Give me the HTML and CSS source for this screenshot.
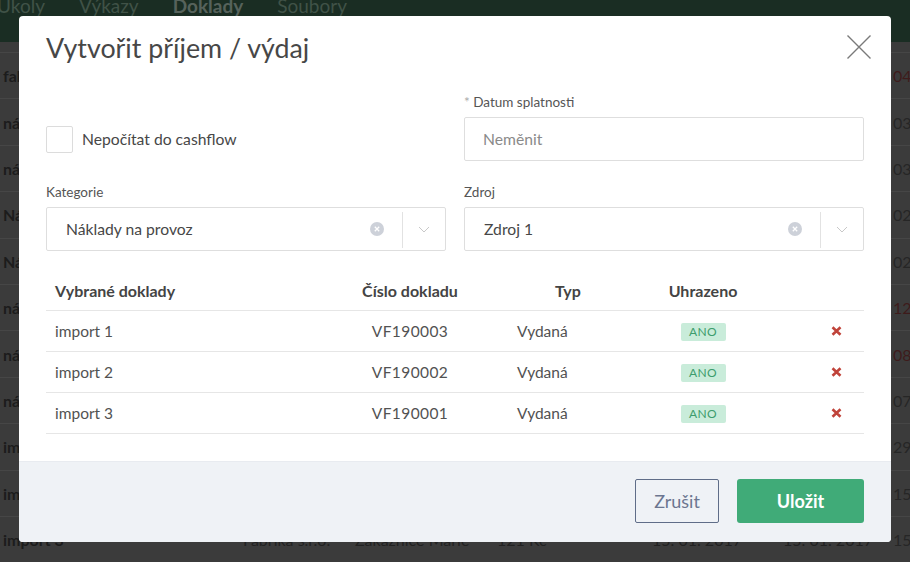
FILE: index.html
```html
<!DOCTYPE html>
<html lang="cs">
<head>
<meta charset="utf-8">
<title>Vytvořit příjem / výdaj</title>
<link rel="stylesheet" href="styles.css">
</head>
<body>
<div class="page">
  <nav class="topnav">
    <div class="topnav-links">
      <span class="nav-link">Úkoly</span>
      <span class="nav-link">Výkazy</span>
      <span class="nav-link active">Doklady</span>
      <span class="nav-link">Soubory</span>
    </div>
  </nav>
  <div class="bg-table">
    <div class="bg-row"><span class="bg-name">faktura</span><span>Fabrika s.r.o.</span><span>Zákaznice Marie</span><span>121 Kč</span><span>04. 02. 2019</span><span>04. 02. 2019</span><span class="bg-date red">04. 02.</span></div>
    <div class="bg-row"><span class="bg-name">nájem</span><span>Fabrika s.r.o.</span><span>Zákaznice Marie</span><span>121 Kč</span><span>03. 02. 2019</span><span>03. 02. 2019</span><span class="bg-date">03. 02.</span></div>
    <div class="bg-row"><span class="bg-name">nájem</span><span>Fabrika s.r.o.</span><span>Zákaznice Marie</span><span>121 Kč</span><span>03. 01. 2019</span><span>03. 01. 2019</span><span class="bg-date">03. 01.</span></div>
    <div class="bg-row"><span class="bg-name">Nákup</span><span>Fabrika s.r.o.</span><span>Zákaznice Marie</span><span>121 Kč</span><span>02. 01. 2019</span><span>02. 01. 2019</span><span class="bg-date">02. 01.</span></div>
    <div class="bg-row"><span class="bg-name">Nákup</span><span>Fabrika s.r.o.</span><span>Zákaznice Marie</span><span>121 Kč</span><span>02. 01. 2019</span><span>02. 01. 2019</span><span class="bg-date">02. 01.</span></div>
    <div class="bg-row"><span class="bg-name">nájem</span><span>Fabrika s.r.o.</span><span>Zákaznice Marie</span><span>121 Kč</span><span>12. 12. 2018</span><span>12. 12. 2018</span><span class="bg-date red">12. 12.</span></div>
    <div class="bg-row"><span class="bg-name">nájem</span><span>Fabrika s.r.o.</span><span>Zákaznice Marie</span><span>121 Kč</span><span>08. 12. 2018</span><span>08. 12. 2018</span><span class="bg-date red">08. 12.</span></div>
    <div class="bg-row"><span class="bg-name">nájem</span><span>Fabrika s.r.o.</span><span>Zákaznice Marie</span><span>121 Kč</span><span>07. 12. 2018</span><span>07. 12. 2018</span><span class="bg-date">07. 12.</span></div>
    <div class="bg-row"><span class="bg-name">import 1</span><span>Fabrika s.r.o.</span><span>Zákaznice Marie</span><span>121 Kč</span><span>29. 01. 2017</span><span>29. 01. 2017</span><span class="bg-date">29. 01.</span></div>
    <div class="bg-row"><span class="bg-name">import 2</span><span>Fabrika s.r.o.</span><span>Zákaznice Marie</span><span>121 Kč</span><span>15. 01. 2017</span><span>15. 01. 2017</span><span class="bg-date">15. 01.</span></div>
    <div class="bg-row"><span class="bg-name">import 3</span><span>Fabrika s.r.o.</span><span>Zákaznice Marie</span><span>121 Kč</span><span>15. 01. 2017</span><span>15. 01. 2017</span><span class="bg-date">15. 01.</span></div>
  </div>
</div>

<div class="modal" role="dialog" aria-label="Vytvořit příjem / výdaj">
  <header class="modal-header">
    <h1 class="modal-title">Vytvořit příjem / výdaj</h1>
    <button class="modal-close" aria-label="Zavřít">
      <svg width="24" height="24" viewBox="0 0 24 24"><path d="M0.5 0.5 L23.5 23.5 M23.5 0.5 L0.5 23.5" stroke="#7a7a7a" stroke-width="1.4" fill="none"/></svg>
    </button>
  </header>

  <div class="modal-body">
    <div class="form-grid">
      <div class="field field-check">
        <label class="checkbox">
          <span class="checkbox-box"></span>
          <span class="checkbox-label">Nepočítat do cashflow</span>
        </label>
      </div>
      <div class="field">
        <div class="field-label"><span class="req">*</span> Datum splatnosti</div>
        <div class="input placeholder">Neměnit</div>
      </div>
      <div class="field">
        <div class="field-label">Kategorie</div>
        <div class="select">
          <span class="select-value">Náklady na provoz</span>
          <span class="select-clear"><svg width="14" height="14" viewBox="0 0 14 14"><circle cx="7" cy="7" r="7" fill="#cdd1d9"/><path d="M4.8 4.8 L9.2 9.2 M9.2 4.8 L4.8 9.2" stroke="#fff" stroke-width="1.3"/></svg></span>
          <span class="select-sep"></span>
          <span class="select-arrow"><svg width="12" height="7" viewBox="0 0 12 7"><path d="M1 1 L6 6 L11 1" stroke="#c8c8c8" stroke-width="1" fill="none"/></svg></span>
        </div>
      </div>
      <div class="field">
        <div class="field-label">Zdroj</div>
        <div class="select">
          <span class="select-value">Zdroj 1</span>
          <span class="select-clear"><svg width="14" height="14" viewBox="0 0 14 14"><circle cx="7" cy="7" r="7" fill="#cdd1d9"/><path d="M4.8 4.8 L9.2 9.2 M9.2 4.8 L4.8 9.2" stroke="#fff" stroke-width="1.3"/></svg></span>
          <span class="select-sep"></span>
          <span class="select-arrow"><svg width="12" height="7" viewBox="0 0 12 7"><path d="M1 1 L6 6 L11 1" stroke="#c8c8c8" stroke-width="1" fill="none"/></svg></span>
        </div>
      </div>
    </div>

    <div class="doc-table">
      <div class="doc-row doc-head">
        <div class="c-name">Vybrané doklady</div>
        <div class="c-num">Číslo dokladu</div>
        <div class="c-type">Typ</div>
        <div class="c-paid">Uhrazeno</div>
        <div class="c-del"></div>
      </div>
      <div class="doc-row">
        <div class="c-name">import 1</div>
        <div class="c-num">VF190003</div>
        <div class="c-type">Vydaná</div>
        <div class="c-paid"><span class="badge">ANO</span></div>
        <div class="c-del"><svg width="11" height="10" viewBox="0 0 11 10"><path d="M1.5 1.2 L9.5 8.8 M9.5 1.2 L1.5 8.8" stroke="#c0433a" stroke-width="2.6"/></svg></div>
      </div>
      <div class="doc-row">
        <div class="c-name">import 2</div>
        <div class="c-num">VF190002</div>
        <div class="c-type">Vydaná</div>
        <div class="c-paid"><span class="badge">ANO</span></div>
        <div class="c-del"><svg width="11" height="10" viewBox="0 0 11 10"><path d="M1.5 1.2 L9.5 8.8 M9.5 1.2 L1.5 8.8" stroke="#c0433a" stroke-width="2.6"/></svg></div>
      </div>
      <div class="doc-row">
        <div class="c-name">import 3</div>
        <div class="c-num">VF190001</div>
        <div class="c-type">Vydaná</div>
        <div class="c-paid"><span class="badge">ANO</span></div>
        <div class="c-del"><svg width="11" height="10" viewBox="0 0 11 10"><path d="M1.5 1.2 L9.5 8.8 M9.5 1.2 L1.5 8.8" stroke="#c0433a" stroke-width="2.6"/></svg></div>
      </div>
    </div>
  </div>

  <footer class="modal-footer">
    <button class="btn btn-cancel">Zrušit</button>
    <button class="btn btn-save">Uložit</button>
  </footer>
</div>
</body>
</html>
```

FILE: styles.css
```css
* { box-sizing: border-box; }

html, body {
  margin: 0;
  padding: 0;
}

body {
  width: 910px;
  height: 562px;
  overflow: hidden;
  background: #3b3b3b;
  font-family: Lato, "Open Sans", "Liberation Sans", sans-serif;
  position: relative;
}

/* ---------- dimmed page behind the dialog ---------- */
.page {
  width: 910px;
}

.topnav {
  height: 42px;
  background: #1a2d23;
  overflow: hidden;
}

.topnav-links {
  display: flex;
  gap: 34px;
  margin-top: -5px;
  margin-left: -3px;
  font-size: 19px;
  line-height: 22px;
}

.nav-link {
  color: #405247;
}

.nav-link.active {
  color: #56625b;
  font-weight: 700;
}

.bg-table {
  padding-top: 10px;
}

.bg-row {
  height: 46.4px;
  border-top: 1px solid #464646;
  display: grid;
  grid-template-columns: 240px 112px 142px 155px 131px 110px auto;
  align-items: center;
  padding-left: 3px;
  font-size: 16px;
  color: #222;
  white-space: nowrap;
}

.bg-name {
  font-weight: 700;
  color: #1c1c1c;
}

.bg-date {
  color: #262626;
}

.bg-date.red {
  color: #3e1b1b;
}

/* ---------- dialog ---------- */
.modal {
  position: absolute;
  left: 19px;
  top: 16px;
  width: 872px;
  height: 526px;
  background: #fff;
  border-radius: 4px;
  overflow: hidden;
  display: flex;
  flex-direction: column;
}

.modal-header {
  position: relative;
  padding: 16px 27px 0;
}

.modal-title {
  margin: 0;
  font-size: 26.8px;
  line-height: 32px;
  font-weight: 400;
  color: #474747;
}

.modal-close {
  position: absolute;
  top: 19px;
  right: 20px;
  width: 24px;
  height: 24px;
  padding: 0;
  border: 0;
  background: none;
  display: block;
}

.modal-close svg {
  display: block;
}

.modal-body {
  padding: 29px 27px 0;
  flex: 1;
}

.form-grid {
  display: grid;
  grid-template-columns: 400px 400px;
  column-gap: 18px;
  row-gap: 22px;
  align-items: end;
}

.field-label {
  font-size: 13.5px;
  line-height: 18px;
  color: #555;
  margin-bottom: 6px;
}

.req {
  color: #aaa;
}

.field-check {
  height: 44px;
  display: flex;
  align-items: center;
}

.checkbox {
  display: flex;
  align-items: center;
  gap: 9px;
}

.checkbox-box {
  width: 27px;
  height: 27px;
  border: 1px solid #dcdcdc;
  border-radius: 2px;
  background: #fff;
}

.checkbox-label {
  font-size: 15.7px;
  color: #474747;
}

.input,
.select {
  height: 44px;
  border: 1px solid #dedede;
  border-radius: 2px;
  font-size: 15.7px;
  display: flex;
  align-items: center;
  padding-left: 18px;
}

.input.placeholder {
  color: #8a8a8a;
}

.select-value {
  flex: 1;
  color: #474747;
  padding-left: 1px;
}

.select-clear {
  width: 14px;
  height: 14px;
  margin-right: 18px;
}

.select-clear svg,
.select-arrow svg {
  display: block;
}

.select-sep {
  width: 1px;
  height: 36px;
  background: #e2e2e2;
  margin-top: 2px;
}

.select-arrow {
  width: 42px;
  display: flex;
  justify-content: center;
}

/* ---------- selected documents ---------- */
.doc-table {
  margin-top: 19px;
}

.doc-row {
  display: grid;
  grid-template-columns: 314px 100px 176px 134px 94px;
  height: 41px;
  align-items: center;
  border-bottom: 1px solid #e6e6e6;
  font-size: 15.5px;
  color: #525252;
  white-space: nowrap;
}

.doc-head {
  font-weight: 700;
  font-size: 16px;
  color: #444;
}

.c-name {
  padding-left: 9px;
}

.c-num {
  text-align: center;
  letter-spacing: 0.4px;
}

.doc-head .c-num {
  letter-spacing: 0;
}

.c-type {
  padding-left: 57px;
}

.doc-head .c-type {
  padding-left: 40px;
  text-align: center;
}

.c-paid {
  text-align: center;
}

.c-del {
  display: flex;
  justify-content: flex-end;
  padding-right: 22px;
}

.badge {
  display: inline-block;
  width: 45px;
  height: 18px;
  line-height: 18px;
  border-radius: 2px;
  background: #c9ecda;
  color: #3d9d6d;
  font-size: 12px;
  letter-spacing: 0.3px;
  text-align: center;
  vertical-align: middle;
}

/* ---------- footer ---------- */
.modal-footer {
  height: 81px;
  background: #eff2f6;
  border-top: 1px solid #e8ebf0;
  display: flex;
  justify-content: flex-end;
  align-items: flex-start;
  gap: 18px;
  padding: 17px 27px 0;
}

.btn {
  height: 44px;
  border-radius: 3px;
  font-family: inherit;
  font-size: 18px;
  cursor: pointer;
}

.btn-cancel {
  width: 84px;
  background: transparent;
  border: 1px solid #5f6d88;
  border-radius: 2px;
  color: #6c7690;
}

.btn-save {
  width: 127px;
  background: #40ab78;
  border: 0;
  color: #fff;
  font-weight: 700;
}
```
